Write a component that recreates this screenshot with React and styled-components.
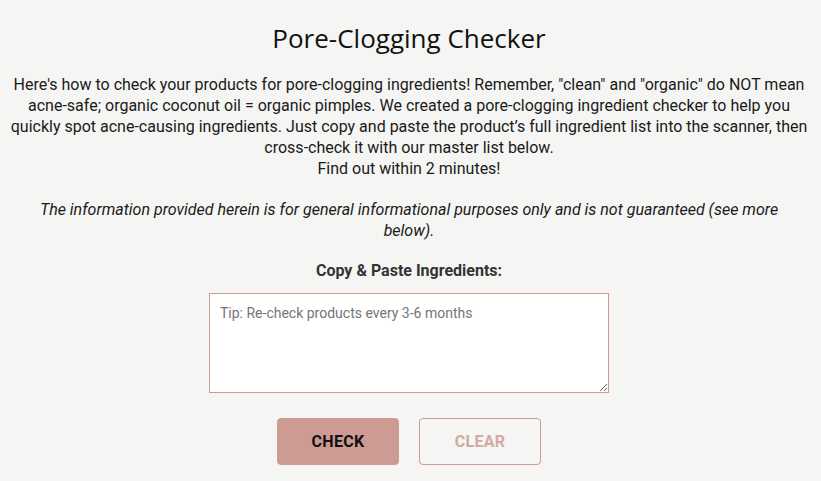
import styled, { createGlobalStyle } from "styled-components";

const GlobalStyle = createGlobalStyle`
  html, body {
    margin: 0;
    padding: 0;
    background: #f5f5f3;
  }
  body {
    font-family: Roboto, "Liberation Sans", sans-serif;
    color: #1a1a1a;
  }
`;

const Page = styled.main`
  padding: 20px 13px 16px 10px;
  display: flex;
  flex-direction: column;
  align-items: center;
  text-align: center;
`;

const Title = styled.h1`
  margin: 0 0 18px;
  font-family: "Open Sans", "DejaVu Sans", sans-serif;
  font-weight: 400;
  font-size: 26px;
  line-height: 36px;
  color: #111;
`;

const Intro = styled.p`
  margin: 0;
  font-size: 16px;
  line-height: 21px;
  color: #1a1a1a;
`;

const Disclaimer = styled.p`
  margin: 20px 0 0;
  font-size: 16px;
  line-height: 21px;
  font-style: italic;
  padding: 0 22px;
`;

const Label = styled.label`
  margin-top: 19px;
  font-size: 16px;
  line-height: 21px;
  font-weight: 700;
  color: #333;
`;

const Input = styled.textarea`
  margin-top: 12px;
  width: 400px;
  height: 100px;
  box-sizing: border-box;
  border: 1px solid #d09a93;
  background: #fff;
  padding: 11px 10px;
  font-family: Roboto, "Liberation Sans", sans-serif;
  font-size: 14px;
  color: #333;
  resize: vertical;

  &::placeholder {
    color: #757575;
  }
`;

const Actions = styled.div`
  margin-top: 25px;
  display: flex;
  gap: 20px;
`;

const Button = styled.button`
  width: 122px;
  height: 47px;
  box-sizing: border-box;
  border-radius: 4px;
  border: 1px solid #cd9a94;
  background: ${({ $primary }) => ($primary ? "#cd9a94" : "transparent")};
  color: ${({ $primary }) => ($primary ? "#111" : "#d4a9a2")};
  font-family: Roboto, "Liberation Sans", sans-serif;
  font-weight: 700;
  font-size: 16px;
  letter-spacing: 0.3px;
  text-transform: uppercase;
  cursor: pointer;
`;

export default function App() {
  return (
    <>
      <GlobalStyle />
      <Page>
        <Title>Pore-Clogging Checker</Title>
        <Intro>
          Here's how to check your products for pore-clogging ingredients!
          Remember, "clean" and "organic" do NOT mean acne-safe; organic
          coconut oil = organic pimples. We created a pore-clogging ingredient
          checker to help you quickly spot acne-causing ingredients. Just copy
          and paste the product’s full ingredient list into the scanner, then
          cross-check it with our master list below.
          <br />
          Find out within 2 minutes!
        </Intro>
        <Disclaimer>
          The information provided herein is for general informational purposes
          only and is not guaranteed (see more below).
        </Disclaimer>
        <Label htmlFor="ingredients">Copy &amp; Paste Ingredients:</Label>
        <Input
          id="ingredients"
          placeholder="Tip: Re-check products every 3-6 months"
        />
        <Actions>
          <Button $primary>Check</Button>
          <Button>Clear</Button>
        </Actions>
      </Page>
    </>
  );
}
